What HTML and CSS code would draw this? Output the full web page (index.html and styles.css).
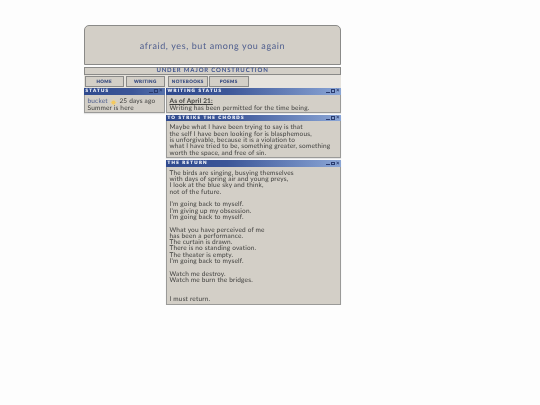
FILE: index.html
```html
<!DOCTYPE html>
<html lang="en">
<head>
<meta charset="utf-8">
<title>afraid, yes, but among you again</title>
<link rel="stylesheet" href="styles.css">
</head>
<body>
<div class="page">
  <header class="banner">afraid, yes, but among you again</header>
  <div class="notice">UNDER MAJOR CONSTRUCTION</div>
  <nav class="nav">
    <a class="tab">HOME</a>
    <a class="tab">WRITING</a>
    <a class="tab">NOTEBOOKS</a>
    <a class="tab">POEMS</a>
  </nav>
  <div class="columns">
    <aside class="side">
      <section class="win">
        <div class="bar bar-short"><span class="title">STATUS</span><span class="ctl"><i class="min"></i><i class="max"></i><i class="cls">×</i></span></div>
        <div class="body body-short"><span class="who">bucket</span> <svg class="sun" viewBox="0 0 10 10"><g stroke="#f6d88a" stroke-width="1"><path d="M5 0v10M0 5h10M1.5 1.5l7 7M8.5 1.5l-7 7"/></g><circle cx="5" cy="5" r="3" fill="#f4c95e"/></svg> 25 days ago<br>Summer is here</div>
      </section>
    </aside>
    <main class="main">
      <section class="win">
        <div class="bar"><span class="title">WRITING STATUS</span><span class="ctl"><i class="min"></i><i class="max"></i><i class="cls">×</i></span></div>
        <div class="body body-short"><strong class="date">As of April 21:</strong><br>Writing has been permitted for the time being.</div>
      </section>
      <section class="win">
        <div class="bar"><span class="title">TO STRIKE THE CHORDS</span><span class="ctl"><i class="min"></i><i class="max"></i><i class="cls">×</i></span></div>
        <div class="body">Maybe what I have been trying to say is that<br>the self I have been looking for is blasphemous,<br>is unforgivable, because it is a violation to<br>what I have tried to be, something greater, something<br>worth the space, and free of sin.</div>
      </section>
      <section class="win">
        <div class="bar"><span class="title">THE RETURN</span><span class="ctl"><i class="min"></i><i class="max"></i><i class="cls">×</i></span></div>
        <div class="body poem">
          <p>The birds are singing, busying themselves<br>with days of spring air and young preys,<br>I look at the blue sky and think,<br>not of the future.</p>
          <p>I'm going back to myself.<br>I'm giving up my obsession.<br>I'm going back to myself.</p>
          <p>What you have perceived of me<br>has been a performance.<br>The curtain is drawn.<br>There is no standing ovation.<br>The theater is empty.<br>I'm going back to myself.</p>
          <p class="gap">Watch me destroy.<br>Watch me burn the bridges.</p>
          <p>I must return.</p>
        </div>
      </section>
    </main>
  </div>
</div>
</body>
</html>
```

FILE: styles.css
```css
* { box-sizing: border-box; }
html, body { margin: 0; background: #fdfdfd; }
body {
  font-family: Lato, "Liberation Sans", sans-serif;
  font-size: 6.5px;
  line-height: 6.3px;
  color: #3f3f3d;
  text-rendering: geometricPrecision;
}
.page { width: 257px; margin: 25px 0 0 84px; filter: blur(.3px); }
.banner {
  height: 40px;
  padding-top: 2px;
  background: #d3cfc7;
  border: 1px solid #8a8a88;
  border-radius: 5px 5px 0 0;
  color: #4f5e8e;
  font-size: 9px;
  letter-spacing: .6px;
  display: flex;
  align-items: center;
  justify-content: center;
}
.notice {
  height: 8px;
  margin-top: 2px;
  background: #d3cfc7;
  border: 1px solid #8a8a88;
  color: #41558f;
  font-size: 6px;
  font-weight: 700;
  letter-spacing: .83px;
  line-height: 6px;
  text-align: center;
}
.nav { display: flex; height: 13px; padding: 1px 0 0 .5px; background: #e6e3dd; gap: 1.5px; }
.tab {
  width: 39.5px;
  height: 11px;
  background: #d3cfc7;
  border: 1px solid #8a8a88;
  color: #35497f;
  font-size: 4.5px;
  font-weight: 900;
  letter-spacing: .4px;
  line-height: 9px;
  text-align: center;
  -webkit-text-stroke: .12px #35497f;
}
.tab:nth-child(3) { margin-left: 1.5px; }
.columns { display: flex; gap: 1px; align-items: flex-start; }
.side { width: 81px; }
.main { width: 175px; display: flex; flex-direction: column; gap: 2px; }
.win { background: #d3cfc7; border: 1px solid #9a9a98; border-top: 0; box-shadow: 0 1px 1px #e4e4e4; }
.bar {
  height: 6.5px;
  margin: 0 -1px;
  background: linear-gradient(90deg, #2f4a8e, #3c5698 35%, #8aa5d5);
  display: flex;
  justify-content: space-between;
  align-items: center;
  padding: 0 1.5px;
}
.bar-short { background: linear-gradient(90deg, #2f4a8e, #3c5698 60%, #5873ac); padding-right: 2.5px; }
.title { color: #f4f6fb; font-size: 4.5px; font-weight: 900; letter-spacing: 1.25px; line-height: 6.5px; -webkit-text-stroke: .12px #f4f6fb; }
.ctl { display: flex; align-items: center; gap: 1.2px; height: 6px; }
.ctl i { display: block; width: 3.6px; height: 3.6px; font-style: normal; }
.min { border-bottom: .6px solid #2a3b6e; }
.max { border: .6px solid #2a3b6e; }
.cls { color: #2a3b6e; font-size: 6px; line-height: 3.6px; font-weight: 700; text-align: center; }
.body { padding: 4px 2px .5px 2.5px; letter-spacing: .17px; }
.body-short { padding: 3.4px 2px 0 2.5px; line-height: 7px; }
.who { color: #4f5e8e; }
.sun { width: 7px; height: 7px; vertical-align: -1.5px; margin: -2px .5px; }
.date { text-decoration: underline; font-weight: 700; }
.poem p { margin: 0 0 6.3px; }
.poem p:last-child { margin: 0; }
.poem .gap { margin-bottom: 12.6px; }
```
